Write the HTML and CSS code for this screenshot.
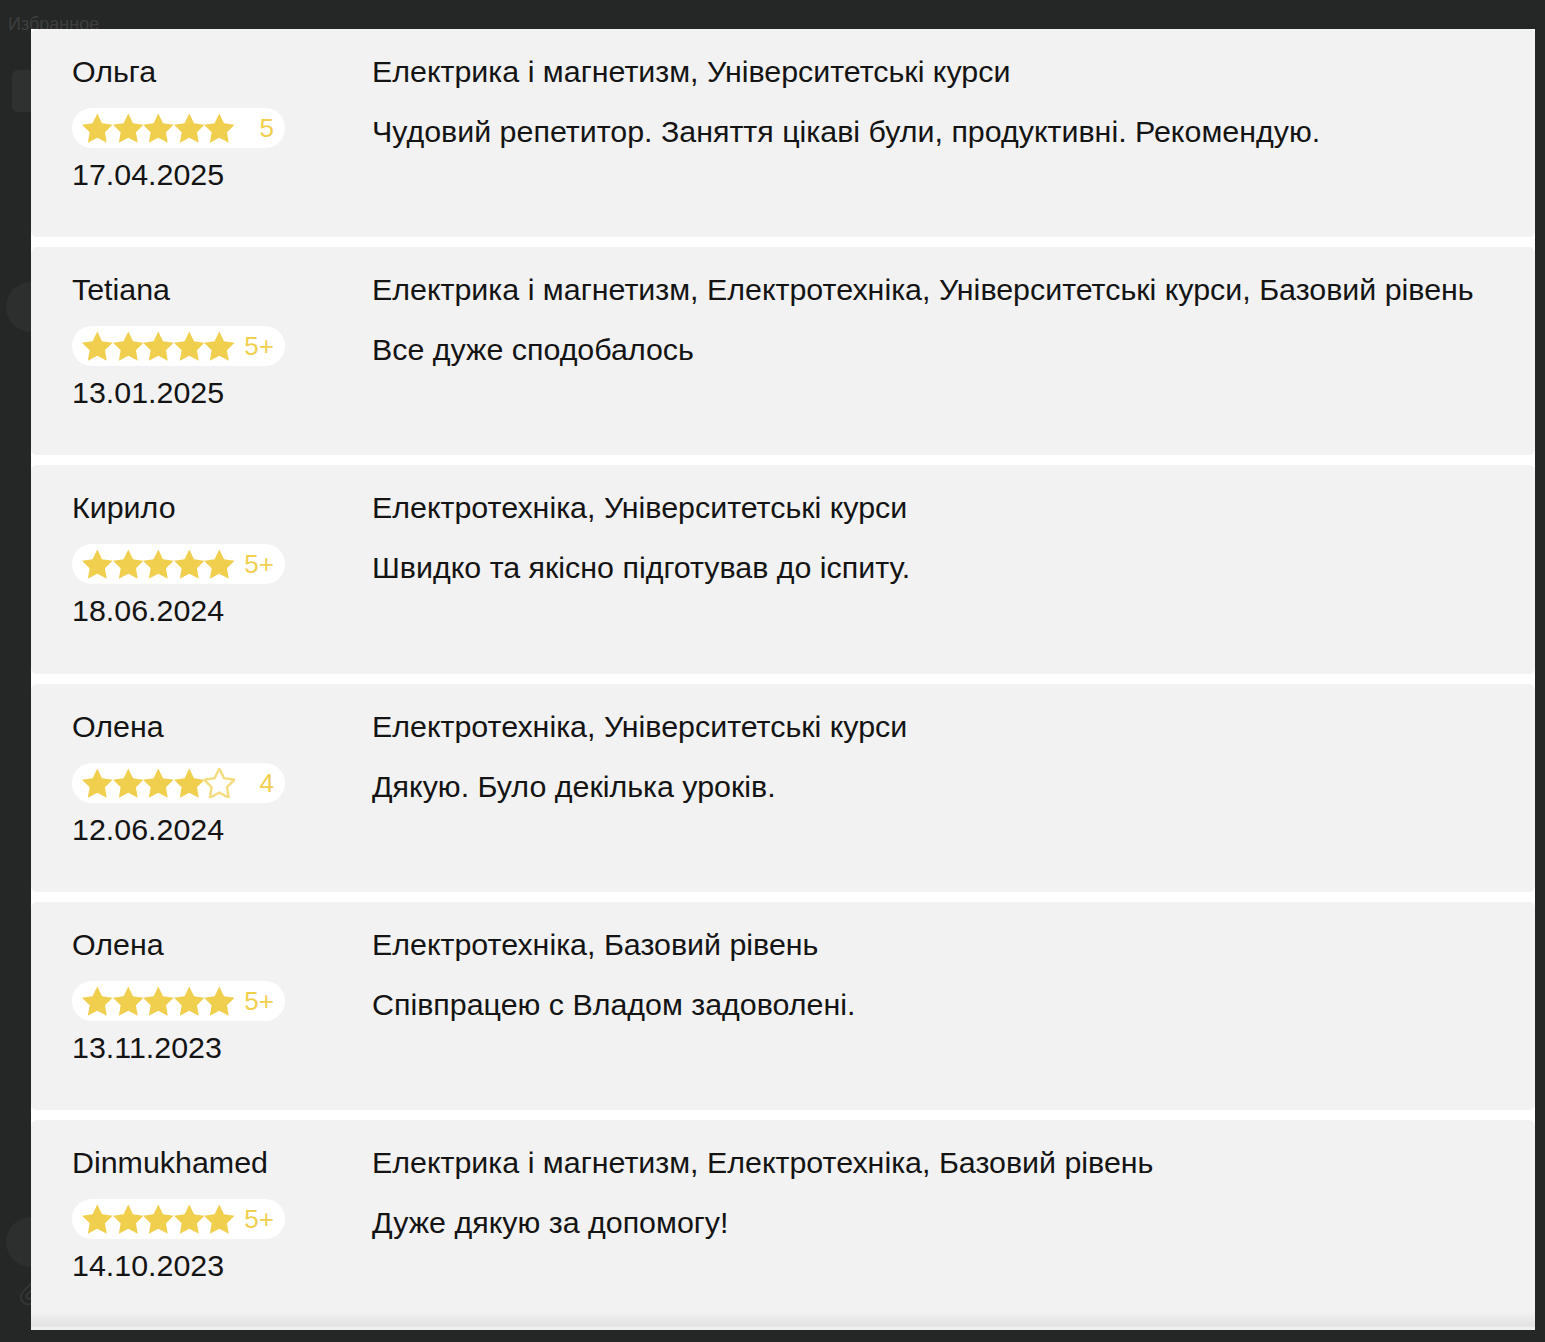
FILE: index.html
```html
<!DOCTYPE html>
<html lang="uk">
<head>
<meta charset="utf-8">
<title>Відгуки</title>
<link rel="stylesheet" href="styles.css">
</head>
<body>
<aside class="sidebar">
  <div class="sidebar-title">Избранное</div>
  <div class="sidebar-tile"></div>
  <div class="sidebar-avatar first"></div>
  <div class="sidebar-avatar last"></div>
  <svg class="sidebar-clip" viewBox="0 0 24 24" width="30" height="30"><path d="M16.5 6.5l-7.8 7.8a2 2 0 0 0 2.8 2.8l8-8a4 4 0 0 0-5.6-5.6l-8.2 8.2a6 6 0 0 0 8.5 8.5l7.3-7.3" fill="none" stroke="#343636" stroke-width="1.6" stroke-linecap="round"/></svg>
</aside>

<svg width="0" height="0" class="defs">
  <defs>
    <path id="star" d="M12 2l3.09 6.26L22 9.27l-5 4.87 1.18 6.88L12 17.77l-6.18 3.25L7 14.14 2 9.27l6.91-1.01L12 2z"/>
  </defs>
</svg>

<section class="reviews">
  <div class="review">
    <div class="review-meta">
      <div class="review-name">Ольга</div>
      <div class="rating">
        <span class="stars">
          <svg class="star" viewBox="2 1.6 20 19.6"><use href="#star"/></svg>
          <svg class="star" viewBox="2 1.6 20 19.6"><use href="#star"/></svg>
          <svg class="star" viewBox="2 1.6 20 19.6"><use href="#star"/></svg>
          <svg class="star" viewBox="2 1.6 20 19.6"><use href="#star"/></svg>
          <svg class="star" viewBox="2 1.6 20 19.6"><use href="#star"/></svg>
        </span>
        <span class="rating-value">5</span>
      </div>
      <div class="review-date">17.04.2025</div>
    </div>
    <div class="review-body">
      <div class="review-subjects">Електрика і магнетизм, Університетські курси</div>
      <div class="review-text">Чудовий репетитор. Заняття цікаві були, продуктивні. Рекомендую.</div>
    </div>
  </div>

  <div class="review">
    <div class="review-meta">
      <div class="review-name">Tetiana</div>
      <div class="rating">
        <span class="stars">
          <svg class="star" viewBox="2 1.6 20 19.6"><use href="#star"/></svg>
          <svg class="star" viewBox="2 1.6 20 19.6"><use href="#star"/></svg>
          <svg class="star" viewBox="2 1.6 20 19.6"><use href="#star"/></svg>
          <svg class="star" viewBox="2 1.6 20 19.6"><use href="#star"/></svg>
          <svg class="star" viewBox="2 1.6 20 19.6"><use href="#star"/></svg>
        </span>
        <span class="rating-value">5+</span>
      </div>
      <div class="review-date">13.01.2025</div>
    </div>
    <div class="review-body">
      <div class="review-subjects">Електрика і магнетизм, Електротехніка, Університетські курси, Базовий рівень</div>
      <div class="review-text">Все дуже сподобалось</div>
    </div>
  </div>

  <div class="review">
    <div class="review-meta">
      <div class="review-name">Кирило</div>
      <div class="rating">
        <span class="stars">
          <svg class="star" viewBox="2 1.6 20 19.6"><use href="#star"/></svg>
          <svg class="star" viewBox="2 1.6 20 19.6"><use href="#star"/></svg>
          <svg class="star" viewBox="2 1.6 20 19.6"><use href="#star"/></svg>
          <svg class="star" viewBox="2 1.6 20 19.6"><use href="#star"/></svg>
          <svg class="star" viewBox="2 1.6 20 19.6"><use href="#star"/></svg>
        </span>
        <span class="rating-value">5+</span>
      </div>
      <div class="review-date">18.06.2024</div>
    </div>
    <div class="review-body">
      <div class="review-subjects">Електротехніка, Університетські курси</div>
      <div class="review-text">Швидко та якісно підготував до іспиту.</div>
    </div>
  </div>

  <div class="review">
    <div class="review-meta">
      <div class="review-name">Олена</div>
      <div class="rating">
        <span class="stars">
          <svg class="star" viewBox="2 1.6 20 19.6"><use href="#star"/></svg>
          <svg class="star" viewBox="2 1.6 20 19.6"><use href="#star"/></svg>
          <svg class="star" viewBox="2 1.6 20 19.6"><use href="#star"/></svg>
          <svg class="star" viewBox="2 1.6 20 19.6"><use href="#star"/></svg>
          <svg class="star empty" viewBox="2 1.6 20 19.6"><use href="#star"/></svg>
        </span>
        <span class="rating-value">4</span>
      </div>
      <div class="review-date">12.06.2024</div>
    </div>
    <div class="review-body">
      <div class="review-subjects">Електротехніка, Університетські курси</div>
      <div class="review-text">Дякую. Було декілька уроків.</div>
    </div>
  </div>

  <div class="review">
    <div class="review-meta">
      <div class="review-name">Олена</div>
      <div class="rating">
        <span class="stars">
          <svg class="star" viewBox="2 1.6 20 19.6"><use href="#star"/></svg>
          <svg class="star" viewBox="2 1.6 20 19.6"><use href="#star"/></svg>
          <svg class="star" viewBox="2 1.6 20 19.6"><use href="#star"/></svg>
          <svg class="star" viewBox="2 1.6 20 19.6"><use href="#star"/></svg>
          <svg class="star" viewBox="2 1.6 20 19.6"><use href="#star"/></svg>
        </span>
        <span class="rating-value">5+</span>
      </div>
      <div class="review-date">13.11.2023</div>
    </div>
    <div class="review-body">
      <div class="review-subjects">Електротехніка, Базовий рівень</div>
      <div class="review-text">Співпрацею с Владом задоволені.</div>
    </div>
  </div>

  <div class="review">
    <div class="review-meta">
      <div class="review-name">Dinmukhamed</div>
      <div class="rating">
        <span class="stars">
          <svg class="star" viewBox="2 1.6 20 19.6"><use href="#star"/></svg>
          <svg class="star" viewBox="2 1.6 20 19.6"><use href="#star"/></svg>
          <svg class="star" viewBox="2 1.6 20 19.6"><use href="#star"/></svg>
          <svg class="star" viewBox="2 1.6 20 19.6"><use href="#star"/></svg>
          <svg class="star" viewBox="2 1.6 20 19.6"><use href="#star"/></svg>
        </span>
        <span class="rating-value">5+</span>
      </div>
      <div class="review-date">14.10.2023</div>
    </div>
    <div class="review-body">
      <div class="review-subjects">Електрика і магнетизм, Електротехніка, Базовий рівень</div>
      <div class="review-text">Дуже дякую за допомогу!</div>
    </div>
  </div>
  <div class="reviews-fade"></div>
</section>
</body>
</html>
```
FILE: styles.css
```css
html, body {
  margin: 0;
  padding: 0;
}

body {
  width: 1545px;
  height: 1342px;
  background: #252626;
  font-family: "Liberation Sans", Arial, sans-serif;
  position: relative;
  overflow: hidden;
}

.defs {
  position: absolute;
}

/* chat sidebar underneath the reviews window */
.sidebar {
  display: flex;
  flex-direction: column;
  padding: 12px 0 0 8px;
}

.sidebar-title {
  font-size: 18px;
  line-height: 24px;
  color: #3d3f3f;
}

.sidebar-tile {
  width: 40px;
  height: 42px;
  margin: 34px 0 0 4px;
  border-radius: 6px;
  background: #2f3131;
}

.sidebar-avatar {
  width: 50px;
  height: 50px;
  border-radius: 50%;
  background: #2d2f2e;
  margin-left: -2px;
}

.sidebar-avatar.first {
  margin-top: 170px;
}

.sidebar-avatar.last {
  margin-top: 885px;
}

.sidebar-clip {
  margin: 10px 0 0 8px;
}

/* reviews window */
.reviews {
  position: absolute;
  left: 31px;
  top: 29px;
  width: 1504px;
  height: 1301px;
  background: #fff;
  overflow: hidden;
  display: flex;
  flex-direction: column;
  gap: 10px;
}

.review {
  flex: none;
  box-sizing: border-box;
  height: 208.2px;
  padding: 25px 41px 0;
  background: #f2f2f2;
  border-radius: 6px;
  display: grid;
  grid-template-columns: 300px 1fr;
  color: #141414;
  font-size: 30.4px;
  line-height: 34px;
}

.review-meta {
  display: flex;
  flex-direction: column;
  align-items: flex-start;
}

.rating {
  margin-top: 20px;
  box-sizing: border-box;
  width: 213px;
  height: 40px;
  padding: 0 11px 0 10px;
  border-radius: 20px;
  background: #fff;
  display: flex;
  align-items: center;
  justify-content: space-between;
}

.stars {
  display: flex;
}

.star {
  width: 30.6px;
  height: 30px;
  fill: #f1cf4e;
}

.star.empty {
  fill: #fff;
  stroke: #f4dc80;
  stroke-width: 1.6px;
}

.rating-value {
  font-size: 26px;
  line-height: 28px;
  color: #f1cf4e;
}

.review-date {
  margin-top: 9px;
}

.review-text {
  margin-top: 26px;
}

.reviews-fade {
  position: absolute;
  left: 0;
  right: 0;
  bottom: 0;
  height: 18px;
  background: linear-gradient(to bottom, rgba(242, 242, 242, 0) 0%, #e2e2e2 75%, #ededed 84%, #f0f0f0 100%);
  pointer-events: none;
}
```
